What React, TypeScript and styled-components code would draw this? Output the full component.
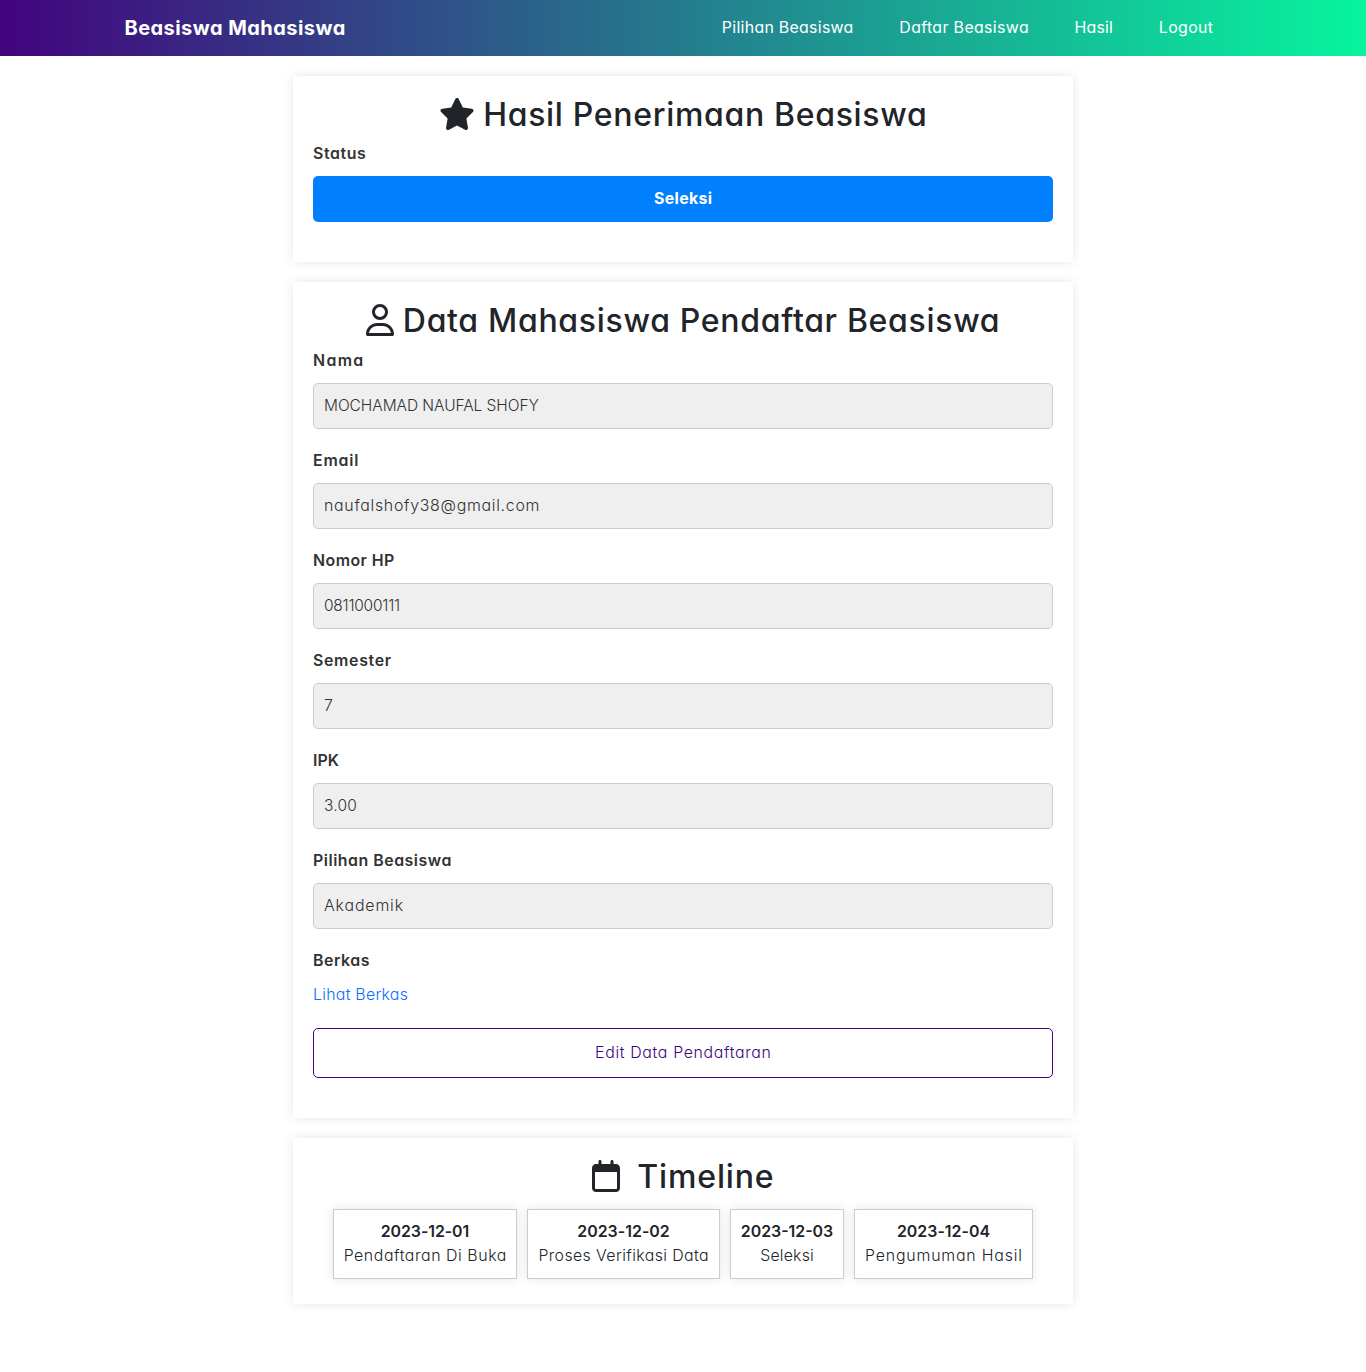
import React from "react";
import styled, { createGlobalStyle } from "styled-components";
import { FaRegUser, FaRegCalendar } from "react-icons/fa6";

const GlobalStyle = createGlobalStyle`
  *, *::before, *::after { box-sizing: border-box; }
  body {
    margin: 0;
    background: #fff;
    color: #212529;
    font-family: Inter, "Noto Sans", sans-serif;
    font-feature-settings: "cv11";
    font-size: 15.9px;
    font-weight: 300;
    line-height: 24px;
  }
`;

/* Tracked text; the negative margin drops the spacing after the last letter. */
const Tracked = styled.span<{ $ls: number }>`
  display: inline-block;
  white-space: nowrap;
  letter-spacing: ${(p) => p.$ls}px;
  margin-right: ${(p) => -p.$ls}px;
`;

const Navbar = styled.header`
  display: flex;
  align-items: center;
  justify-content: space-between;
  height: 56px;
  padding: 0 153px 0 124.5px;
  background: linear-gradient(to right, #42047e, #07f49e);
  color: #fff;
`;

const Brand = styled.a`
  font-size: 20px;
  font-weight: 700;
  line-height: 30px;
  color: inherit;
  text-decoration: none;
`;

const NavLinks = styled.nav`
  display: flex;
  gap: 46px;
`;

const NavLink = styled.a`
  font-weight: 400;
  color: inherit;
  text-decoration: none;
`;

const Page = styled.main`
  display: flex;
  flex-direction: column;
  gap: 20px;
  width: 780px;
  margin: 0 auto;
  padding: 20px 0 68px;
`;

const Card = styled.section`
  padding: 20px;
  background: #fff;
  box-shadow: 0 0 10px rgba(0, 0, 0, 0.1);
`;

const Heading = styled.h2<{ $gap: number; $trail?: number }>`
  display: flex;
  justify-content: center;
  gap: ${(p) => p.$gap}px;
  margin: 0 0 8px;
  padding-right: ${(p) => p.$trail ?? 0}px;
  font-size: 32px;
  font-weight: 500;
  line-height: 38.4px;

  svg {
    margin-top: 2px;
    height: 32px;
    width: auto;
    flex: none;
  }
`;

const Field = styled.div`
  display: flex;
  flex-direction: column;
  gap: 10px;
  margin-bottom: 20px;
`;

const Label = styled.label`
  font-weight: 600;
  color: #333;
`;

const Value = styled.div<{ $size: number }>`
  height: 46px;
  padding: 10px;
  border: 1px solid #ccc;
  border-radius: 5px;
  background: #efefef;
  color: #333;
  font-size: ${(p) => p.$size}px;
`;

const Status = styled.div`
  height: 46px;
  padding: 11px;
  border-radius: 5px;
  background: #007fff;
  color: #fff;
  font-weight: 700;
  text-align: center;
`;

const FileLink = styled.a`
  color: #0d6efd;
  text-decoration: none;
`;

const EditButton = styled.button`
  display: block;
  width: 100%;
  height: 50px;
  margin: 21.2px 0 20px;
  padding: 0;
  border: 1px solid #42047e;
  border-radius: 5px;
  background: transparent;
  color: #42047e;
  font: inherit;
  font-feature-settings: inherit;
`;

const Timeline = styled.ol`
  display: flex;
  justify-content: center;
  gap: 10px;
  margin: 0 0 5px;
  padding: 5px 0 0;
  list-style: none;
`;

const Step = styled.li<{ $width: number }>`
  width: ${(p) => p.$width}px;
  height: 70px;
  padding: 10px 0;
  border: 1px solid #ccc;
  background: #fff;
  box-shadow: 0 0 10px rgba(0, 0, 0, 0.1);
  display: flex;
  flex-direction: column;
  align-items: center;
`;

const StepDate = styled.strong`
  font-weight: 600;
`;

const StarIcon = () => (
  <svg viewBox="0 0 576 512" fill="currentColor" aria-hidden="true">
    <path d="M316.9 18C311.6 7 300.4 0 288.1 0s-23.4 7-28.8 18L195 150.3 51.4 171.5c-12 1.8-22 10.2-25.7 21.7s-.7 24.2 7.9 32.7L137.8 329 113.2 474.7c-2 12 3 24.2 12.9 31.3s23 8 33.8 2.3l128.3-68.5 128.3 68.5c10.8 5.7 23.9 4.9 33.8-2.3s14.9-19.3 12.9-31.3L438.5 329 542.7 225.9c8.6-8.5 11.7-21.2 7.9-32.7s-13.7-19.9-25.7-21.7L381.2 150.3 316.9 18z" />
  </svg>
);

const links = [
  { text: "Pilihan Beasiswa", ls: 0.29 },
  { text: "Daftar Beasiswa", ls: 0.36 },
  { text: "Hasil", ls: 0.14 },
  { text: "Logout", ls: 0.36 },
];

const fields = [
  { label: "Nama", labelLs: 1.33, value: "MOCHAMAD NAUFAL SHOFY", size: 15.5, ls: -0.052 },
  { label: "Email", labelLs: 0.84, value: "naufalshofy38@gmail.com", size: 15.9, ls: 0.71 },
  { label: "Nomor HP", labelLs: 0.45, value: "0811000111", size: 15.5, ls: -0.242 },
  { label: "Semester", labelLs: 0.68, value: "7", size: 15.9, ls: 0 },
  { label: "IPK", labelLs: 0, value: "3.00", size: 15.5, ls: 0.25 },
  { label: "Pilihan Beasiswa", labelLs: 0.52, value: "Akademik", size: 15.9, ls: 0.86 },
];

const steps = [
  { date: "2023-12-01", dateLs: -0.06, text: "Pendaftaran Di Buka", ls: 0.56, width: 184 },
  { date: "2023-12-02", dateLs: 0.04, text: "Proses Verifikasi Data", ls: 0.39, width: 193 },
  { date: "2023-12-03", dateLs: 0, text: "Seleksi", ls: 0.18, width: 114 },
  { date: "2023-12-04", dateLs: 0.04, text: "Pengumuman Hasil", ls: 0.8, width: 179 },
];

export default function App() {
  return (
    <>
      <GlobalStyle />
      <Navbar>
        <Brand><Tracked $ls={0.45}>Beasiswa Mahasiswa</Tracked></Brand>
        <NavLinks>
          {links.map((l) => (
            <NavLink key={l.text}><Tracked $ls={l.ls}>{l.text}</Tracked></NavLink>
          ))}
        </NavLinks>
      </Navbar>
      <Page>
        <Card>
          <Heading $gap={8} $trail={0}>
            <StarIcon />
            <Tracked $ls={0.68}>Hasil Penerimaan Beasiswa</Tracked>
          </Heading>
          <Field>
            <Label><Tracked $ls={0.61}>Status</Tracked></Label>
            <Status><Tracked $ls={0.35}>Seleksi</Tracked></Status>
          </Field>
        </Card>
        <Card>
          <Heading $gap={6.5} $trail={2}>
            <FaRegUser />
            <Tracked $ls={0.69}>Data Mahasiswa Pendaftar Beasiswa</Tracked>
          </Heading>
          {fields.map((f) => (
            <Field key={f.label}>
              <Label><Tracked $ls={f.labelLs}>{f.label}</Tracked></Label>
              <Value $size={f.size}><Tracked $ls={f.ls}>{f.value}</Tracked></Value>
            </Field>
          ))}
          <Field>
            <Label><Tracked $ls={0.55}>Berkas</Tracked></Label>
            <FileLink><Tracked $ls={0.26}>Lihat Berkas</Tracked></FileLink>
          </Field>
          <EditButton><Tracked $ls={0.65}>Edit Data Pendaftaran</Tracked></EditButton>
        </Card>
        <Card>
          <Heading $gap={15.5} $trail={2.5}>
            <FaRegCalendar />
            <Tracked $ls={0.85}>Timeline</Tracked>
          </Heading>
          <Timeline>
            {steps.map((s) => (
              <Step key={s.date} $width={s.width}>
                <StepDate><Tracked $ls={s.dateLs}>{s.date}</Tracked></StepDate>
                <Tracked $ls={s.ls}>{s.text}</Tracked>
              </Step>
            ))}
          </Timeline>
        </Card>
      </Page>
    </>
  );
}
